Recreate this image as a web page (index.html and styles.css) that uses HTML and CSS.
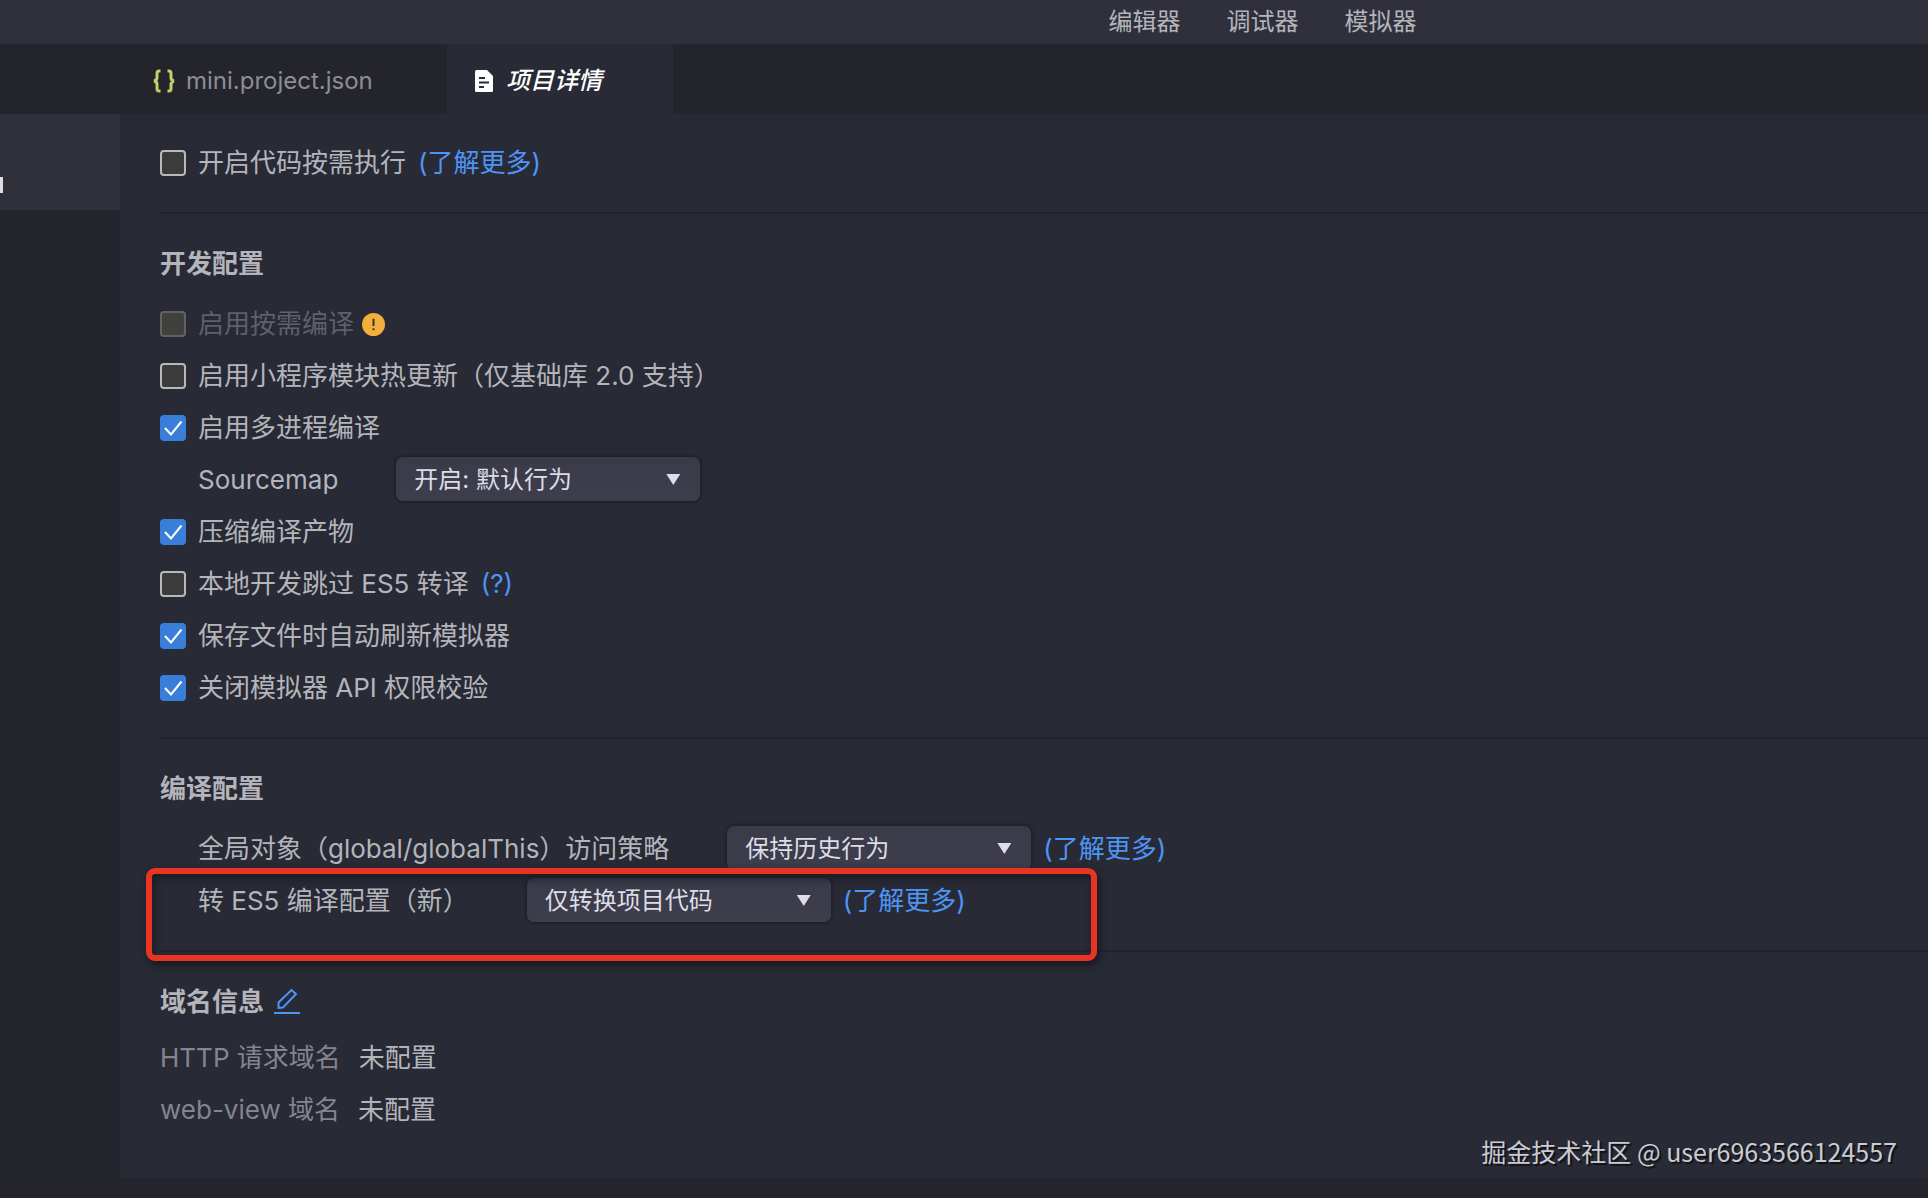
FILE: index.html
```html
<!DOCTYPE html>
<html lang="zh-CN">
<head>
<meta charset="utf-8">
<title>项目详情</title>
<link rel="stylesheet" href="styles.css">
</head>
<body>
<header class="topbar">
  <button type="button" class="topbar-item">编辑器</button>
  <button type="button" class="topbar-item">调试器</button>
  <button type="button" class="topbar-item">模拟器</button>
</header>
<nav class="tabs">
  <a class="tab tab-file" href="#json">
    <svg class="icon-json" viewBox="0 0 22 24" aria-hidden="true"><path d="M7.500 2H6Q4 2 4 4.500V8.500Q4 11.500 1 12Q4 12.500 4 15.500V19.500Q4 22 6 22H7.500M14.500 2H16Q18 2 18 4.500V8.500Q18 11.500 21 12Q18 12.500 18 15.500V19.500Q18 22 16 22H14.500"/></svg>
    <span>mini.project.json</span>
  </a>
  <a class="tab tab-active" href="#detail">
    <svg class="icon-doc" viewBox="0 0 18 22" aria-hidden="true"><path class="doc-page" d="M1.500 0H12L18 6V20.500Q18 22 16.500 22H1.500Q0 22 0 20.500V1.500Q0 0 1.500 0Z"/><path class="doc-lines" d="M4 8H10M4 12.500H14M4 17H9"/></svg>
    <span>项目详情</span>
  </a>
</nav>
<div class="workspace">
  <aside class="sidebar"><div class="sidebar-active"><span class="sidebar-mark"></span></div></aside>
  <main class="panel" id="detail">
    <section class="section">
      <div class="row"><input class="check" type="checkbox" id="lazy"><label for="lazy">开启代码按需执行</label><a class="link" href="#more">(了解更多)</a></div>
    </section>
    <section class="section">
      <h2 class="heading">开发配置</h2>
      <div class="row row-disabled"><input class="check" type="checkbox" id="ondemand" disabled><label for="ondemand">启用按需编译</label>
        <svg class="icon-warn" viewBox="0 0 24 24" aria-hidden="true"><circle cx="12" cy="12" r="12"/><path d="M12 6V13.500M12 16V18"/></svg></div>
      <div class="row"><input class="check" type="checkbox" id="hmr"><label for="hmr">启用小程序模块热更新（仅基础库 2.0 支持）</label></div>
      <div class="row"><input class="check" type="checkbox" id="multi" checked><label for="multi">启用多进程编译</label></div>
      <div class="row row-select"><label for="map">Sourcemap</label><span class="select"><select id="map"><option>开启: 默认行为</option></select></span></div>
      <div class="row"><input class="check" type="checkbox" id="minify" checked><label for="minify">压缩编译产物</label></div>
      <div class="row"><input class="check" type="checkbox" id="skip"><label for="skip">本地开发跳过 ES5 转译</label><a class="link" href="#help">(?)</a></div>
      <div class="row"><input class="check" type="checkbox" id="reload" checked><label for="reload">保存文件时自动刷新模拟器</label></div>
      <div class="row"><input class="check" type="checkbox" id="api" checked><label for="api">关闭模拟器 API 权限校验</label></div>
    </section>
    <section class="section">
      <h2 class="heading">编译配置</h2>
      <div class="row row-select"><label for="global">全局对象（global/globalThis）访问策略</label><span class="select"><select id="global"><option>保持历史行为</option></select></span><a class="link" href="#more">(了解更多)</a></div>
      <div class="row row-select row-marked"><label for="es5">转 ES5 编译配置（新）</label><span class="select"><select id="es5"><option>仅转换项目代码</option></select></span><a class="link" href="#more">(了解更多)</a></div>
    </section>
    <section class="section section-last">
      <h2 class="heading heading-tight">域名信息
        <button type="button" class="edit" aria-label="编辑域名信息"><svg viewBox="0 0 26 28" aria-hidden="true"><path d="M4.500 20V14.500L17.500 2L22 6L9 19.500Z"/><path d="M0 25H26"/></svg></button></h2>
      <dl class="domains">
        <div class="domain"><dt>HTTP 请求域名</dt><dd>未配置</dd></div>
        <div class="domain"><dt>web-view 域名</dt><dd>未配置</dd></div>
      </dl>
    </section>
  </main>
</div>
<p class="watermark">掘金技术社区 @ user6963566124557</p>
</body>
</html>
```
FILE: styles.css
```css
*, *::before, *::after { box-sizing: border-box; }

body {
  position: relative;
  display: flex;
  flex-direction: column;
  min-height: 100vh;
  margin: 0;
  background: #24242c;
  color: #b4b5ba;
  font: 26px/52px Inter, "Noto Sans CJK SC", sans-serif;
}

a { text-decoration: none; }

button, select {
  border: 0;
  font-family: inherit;
  cursor: pointer;
}

/* Top bar and tabs */
.topbar {
  display: flex;
  gap: 46px;
  height: 44px;
  padding-left: 57.5%;
  background: #30303c;
}

.topbar-item {
  padding: 0;
  background: none;
  color: #b4b4bb;
  font-size: 24px;
  line-height: 40px;
}

.tabs {
  display: flex;
  height: 70px;
  padding-left: 120px;
  font-size: 24px;
  line-height: 64px;
}

.tab {
  display: flex;
  align-items: center;
  padding-top: 4px;
  color: #8d8d96;
}

.tab-file {
  width: 327px;
  padding-left: 33px;
  gap: 11px;
}

.tab-active {
  width: 226px;
  padding-left: 28px;
  gap: 13px;
  background: #282a35;
  color: #fff;
  font-style: italic;
  font-weight: 500;
}

.icon-json {
  width: 22px;
  height: 24px;
  fill: none;
  stroke: #c5cf68;
  stroke-width: 3;
}

.icon-doc { width: 18px; height: 22px; }
.doc-page { fill: #fff; }
.doc-lines { stroke: #282a35; stroke-width: 2; }

/* Workspace */
.workspace { display: flex; flex: 1; }

.sidebar { width: 120px; }

.sidebar-active {
  display: flex;
  height: 96px;
  padding-top: 63px;
  background: #30303b;
}

.sidebar-mark {
  width: 3px;
  height: 16px;
  background: #dedee2;
}

.panel {
  flex: 1;
  margin-bottom: 20px;
  padding-left: 40px;
  border-bottom-left-radius: 4px;
  background: #282a35;
}

.section {
  padding: 24px 0 23px;
  border-bottom: 2px solid #21222b;
}

.section:first-child { padding-top: 23px; }
.section-last { border-bottom: 0; }

.heading {
  display: flex;
  align-items: center;
  gap: 10px;
  margin: 0 0 8px;
  font-size: 26px;
  font-weight: 700;
}

.heading-tight { margin-bottom: 4px; }

.row {
  position: relative;
  display: flex;
  align-items: center;
  gap: 12px;
  height: 52px;
}

.row-disabled { gap: 8px; }
.row-disabled label { margin-left: 4px; color: #5f6069; }

.row-select { padding-left: 38px; }
.row-select label { margin-right: 46px; }

.link { color: #4e94f5; }

/* Form controls */
.check {
  appearance: none;
  width: 26px;
  height: 26px;
  margin: 0;
  border: 2px solid #b9b9b9;
  border-radius: 4px;
  background: #3b3b3b;
}

.check:disabled { border-color: #62635f; background: #40403e; }

.check:checked {
  border: 0;
  background: #397fd9 url("data:image/svg+xml,%3Csvg xmlns='http://www.w3.org/2000/svg' viewBox='0 0 26 26'%3E%3Cpath d='M5 13L11 19.500L21.500 6.500' fill='none' stroke='white' stroke-width='2'/%3E%3C/svg%3E");
}

.select {
  position: relative;
  display: flex;
  width: 304px;
  height: 46px;
  padding-bottom: 2px;
}

.select::after {
  content: "";
  position: absolute;
  top: 17px;
  right: 20px;
  width: 14px;
  height: 11px;
  background: #dedde8;
  clip-path: polygon(0 0, 100% 0, 50% 100%);
  pointer-events: none;
}

.select select {
  appearance: none;
  width: 100%;
  padding: 0 40px 0 18px;
  border-radius: 7px;
  background: linear-gradient(#3a3b49, #3e3d4b);
  box-shadow: 0 0 2px 2px #20212a;
  color: #dddde6;
  font-size: 24px;
}

/* Red frame drawn round the ES5 setting */
.row-marked::after {
  content: "";
  position: absolute;
  top: -7px;
  left: -14px;
  width: 951px;
  height: 93px;
  border: 6px solid #e93424;
  border-radius: 9px;
  box-shadow: 2px 4px 8px #16171e, inset 2px 4px 8px #1b1c24;
  pointer-events: none;
}

.icon-warn { width: 23px; height: 23px; }
.icon-warn circle { fill: #f2af3d; }
.icon-warn path { stroke: #33302c; stroke-width: 2; }

.edit {
  display: flex;
  padding: 0;
  background: none;
}

.edit svg {
  width: 26px;
  height: 28px;
  fill: none;
  stroke: #4e94f5;
  stroke-width: 2;
}

.domains { margin: 0; }
.domain { display: flex; gap: 18px; }
.domain dt { color: #84858e; }
.domain dd { margin: 0; }

.watermark {
  position: absolute;
  right: 31px;
  bottom: 21px;
  margin: 0;
  color: #cbccd1;
  font-family: "Noto Sans CJK SC", sans-serif;
  font-size: 25px;
  text-shadow: 2px 2px 1px #111218;
}
```
